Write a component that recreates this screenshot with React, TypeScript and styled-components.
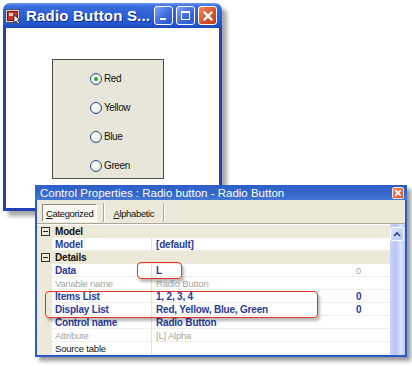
import React from "react";
import styled, { createGlobalStyle, css } from "styled-components";

const GlobalStyle = createGlobalStyle`
  html, body {
    margin: 0;
    padding: 0;
    background: #fff;
  }
  body {
    font-family: "Liberation Sans", Arial, sans-serif;
  }
`;

type Tone = "strong" | "muted" | "plain";

interface IRow {
  section?: boolean;
  label: string;
  labelTone?: Tone;
  value?: string;
  valueTone?: Tone;
  extra?: string;
  extraTone?: Tone;
}

const rows: IRow[] = [
  { section: true, label: "Model" },
  { label: "Model", labelTone: "strong", value: "[default]", valueTone: "strong" },
  { section: true, label: "Details" },
  { label: "Data", labelTone: "strong", value: "L", valueTone: "strong", extra: "0", extraTone: "muted" },
  { label: "Variable name", labelTone: "muted", value: "Radio Button", valueTone: "muted" },
  { label: "Items List", labelTone: "strong", value: "1, 2, 3, 4", valueTone: "strong", extra: "0", extraTone: "strong" },
  { label: "Display List", labelTone: "strong", value: "Red, Yellow, Blue, Green", valueTone: "strong", extra: "0", extraTone: "strong" },
  { label: "Control name", labelTone: "strong", value: "Radio Button", valueTone: "strong" },
  { label: "Attribute", labelTone: "muted", value: "[L] Alpha", valueTone: "muted" },
  { label: "Source table", labelTone: "plain", value: "" },
];

const colours = ["Red", "Yellow", "Blue", "Green"];

const Stage = styled.div`
  position: relative;
  width: 412px;
  height: 366px;
  overflow: hidden;
  background: #fff;
`;

/* ---------- first window ---------- */

const MainWindow = styled.div`
  margin: 3px 0 0 3px;
  width: 219px;
  height: 208px;
  display: flex;
  flex-direction: column;
  border-radius: 7px 7px 0 0;
  box-shadow: 5px 5px 4px rgba(0, 0, 0, 0.35);
`;

const TitleBar = styled.div`
  height: 25px;
  display: flex;
  align-items: center;
  padding: 0 5px 0 2px;
  border-radius: 7px 7px 0 0;
  background: linear-gradient(
    180deg,
    #6f9bf0 0%,
    #3a6ddc 12%,
    #2a5fd6 50%,
    #2457cd 85%,
    #1d48b8 100%
  );
`;

const TitleText = styled.span`
  margin-left: 4px;
  color: #fff;
  font-weight: bold;
  font-size: 15px;
  letter-spacing: 0.2px;
  text-shadow: 1px 1px 0 #0b2b8a;
  white-space: nowrap;
`;

const CaptionButtons = styled.div`
  margin-left: auto;
  display: flex;
  gap: 3px;
`;

const CaptionButton = styled.div<{ $close?: boolean }>`
  width: 19px;
  height: 19px;
  box-sizing: border-box;
  border: 1px solid #fff;
  border-radius: 3px;
  display: flex;
  align-items: center;
  justify-content: center;
  background: ${(p) =>
    p.$close
      ? "linear-gradient(135deg, #f08a64 0%, #d9522a 55%, #c23c1c 100%)"
      : "linear-gradient(135deg, #7fa4f4 0%, #3d6be0 55%, #2a56cc 100%)"};
`;

const ClientArea = styled.div`
  flex: 1;
  background: #fff;
  border: 3px solid #2540b4;
  border-top: none;
  padding: 31px 0 0 46px;
`;

const GroupBox = styled.div`
  width: 112px;
  height: 120px;
  box-sizing: border-box;
  background: #e8e6d8;
  border: 1px solid #4a4a4a;
  padding: 4px 0 0 37px;
`;

const RadioRow = styled.div`
  height: 29px;
  display: flex;
  align-items: center;
  gap: 2px;
  font-size: 10px;
  letter-spacing: -0.4px;
  color: #111;
`;

const RadioCircle = styled.span<{ $checked?: boolean }>`
  width: 12px;
  height: 12px;
  box-sizing: border-box;
  border-radius: 50%;
  border: 1px solid #1d5283;
  background: radial-gradient(circle at 35% 35%, #fff 0%, #f2f2ec 45%, #d4d4cb 100%);
  display: flex;
  align-items: center;
  justify-content: center;

  &::after {
    content: "";
    display: ${(p) => (p.$checked ? "block" : "none")};
    width: 4px;
    height: 4px;
    border-radius: 50%;
    background: #2aa82a;
  }
`;

/* ---------- properties window ---------- */

const PropsWindow = styled.div`
  position: absolute;
  left: 35px;
  top: 185px;
  width: 372px;
  height: 172px;
  box-sizing: border-box;
  display: flex;
  flex-direction: column;
  background: #ece9d8;
  border: 2px solid #2a5ac6;
  border-top: none;
  box-shadow: 4px 4px 4px rgba(0, 0, 0, 0.4);
`;

const SmallTitleBar = styled.div`
  height: 16px;
  margin: 0 -2px;
  display: flex;
  align-items: center;
  padding: 0 3px 0 5px;
  background: linear-gradient(180deg, #2d5ec6 0%, #3468cc 60%, #4576d4 100%);
  color: #fff;
  font-size: 11.5px;
  white-space: nowrap;
`;

const SmallClose = styled.div`
  margin-left: auto;
  width: 12px;
  height: 12px;
  box-sizing: border-box;
  border: 1px solid #f3e7e0;
  border-radius: 2px;
  background: linear-gradient(135deg, #ee8a66 0%, #d4502a 100%);
  display: flex;
  align-items: center;
  justify-content: center;
`;

const Toolbar = styled.div`
  height: 24px;
  display: flex;
  align-items: flex-start;
  padding: 4px 0 0 5px;
  box-sizing: border-box;
  font-size: 9.5px;
  letter-spacing: -0.35px;
  color: #111;
`;

const ToolButton = styled.div<{ $pressed?: boolean }>`
  height: 18px;
  box-sizing: border-box;
  padding: 0 3px;
  display: flex;
  align-items: center;
  ${(p) =>
    p.$pressed &&
    css`
      background: #f7f6f1;
      border: 1px solid;
      border-color: #8c8a80 #fff #fff #8c8a80;
    `}

  u {
    text-decoration: underline;
  }
`;

const ToolSeparator = styled.div`
  width: 2px;
  height: 19px;
  margin: -1px 5px 0 6px;
  border-left: 1px solid #aca899;
  border-right: 1px solid #fff;
  box-sizing: border-box;
`;

const GridArea = styled.div`
  flex: 1;
  display: flex;
  border-top: 1px solid #aca899;
  background: #fff;
`;

const Grid = styled.div`
  flex: 1;
  padding-top: 1px;
`;

const GridRow = styled.div<{ $section?: boolean }>`
  height: 13px;
  display: grid;
  grid-template-columns: 15px 100px 197px 1fr;
  line-height: 13px;
  font-size: 9.5px;
  letter-spacing: -0.2px;
  background: ${(p) => (p.$section ? "#ece9d8" : "#fff")};
`;

const Gutter = styled.div`
  background: #ece9d8;
  display: flex;
  align-items: center;
  justify-content: center;
`;

const Collapse = styled.span`
  position: relative;
  width: 9px;
  height: 9px;
  box-sizing: border-box;
  border: 1px solid #333;
  margin-left: 2px;

  &::after {
    content: "";
    position: absolute;
    left: 1px;
    right: 1px;
    top: 3px;
    height: 1px;
    background: #222;
  }
`;

const SectionTitle = styled.div`
  grid-column: 2 / 5;
  padding-left: 3px;
  font-weight: bold;
  font-size: 10px;
  color: #111;
`;

const toneStyle = (tone?: Tone) => {
  if (tone === "strong") return "color: #283b9c; font-weight: bold; font-size: 10px;";
  if (tone === "muted") return "color: #a5a5a5;";
  return "color: #111;";
};

const Cell = styled.div<{ $tone?: Tone; $divider?: boolean; $pad?: number }>`
  padding-left: ${(p) => p.$pad ?? 3}px;
  border-bottom: 1px solid #efeee8;
  border-right: ${(p) => (p.$divider ? "1px solid #e2e1da" : "none")};
  box-sizing: border-box;
  white-space: nowrap;
  overflow: hidden;
  ${(p) => toneStyle(p.$tone)}
`;

const Scrollbar = styled.div`
  width: 15px;
  padding: 3px 1px 0 0;
  box-sizing: border-box;
  background: linear-gradient(90deg, #c9d2fa 0%, #b9c5f5 40%, #dde3fc 70%, #c4cdf7 100%);
`;

const ScrollUp = styled.div`
  height: 12px;
  border: 1px solid #fff;
  border-radius: 2px;
  background: linear-gradient(135deg, #d8e3fd 0%, #b6c8f6 100%);
  display: flex;
  align-items: center;
  justify-content: center;
`;

const Highlight = styled.div<{ $left: number; $top: number; $w: number; $h: number }>`
  position: absolute;
  left: ${(p) => p.$left}px;
  top: ${(p) => p.$top}px;
  width: ${(p) => p.$w}px;
  height: ${(p) => p.$h}px;
  box-sizing: border-box;
  border: 1.5px solid #e2332b;
  border-radius: 4px;
  box-shadow: 2px 3px 3px rgba(0, 0, 0, 0.28);
`;

function AppIcon() {
  return (
    <svg width="17" height="16" viewBox="0 0 17 16">
      <rect x="0.5" y="1.5" width="14" height="13" fill="#d8d4cc" stroke="#555" />
      <rect x="2.5" y="3.5" width="10" height="9" fill="#c83228" stroke="#7a1a14" />
      <rect x="4" y="5" width="4" height="3" fill="#f0d0c0" />
      <path d="M9 7 L9 15 L11 13 L13 16 L14.5 15 L12.5 12 L15 12 Z" fill="#fff" stroke="#222" strokeWidth="0.8" />
    </svg>
  );
}

function CloseGlyph({ size }: { size: number }) {
  return (
    <svg width={size} height={size} viewBox="0 0 10 10">
      <path d="M2 2 L8 8 M8 2 L2 8" stroke="#fff" strokeWidth="2" strokeLinecap="round" />
    </svg>
  );
}

export default function App() {
  return (
    <Stage>
      <GlobalStyle />

      <MainWindow>
        <TitleBar>
          <AppIcon />
          <TitleText>Radio Button S...</TitleText>
          <CaptionButtons>
            <CaptionButton>
              <svg width="13" height="13" viewBox="0 0 13 13">
                <rect x="3" y="9" width="6" height="2" fill="#fff" />
              </svg>
            </CaptionButton>
            <CaptionButton>
              <svg width="13" height="13" viewBox="0 0 13 13">
                <rect x="2.5" y="2.5" width="8" height="8" fill="none" stroke="#fff" />
                <rect x="2" y="2" width="9" height="2" fill="#fff" />
              </svg>
            </CaptionButton>
            <CaptionButton $close>
              <CloseGlyph size={12} />
            </CaptionButton>
          </CaptionButtons>
        </TitleBar>
        <ClientArea>
          <GroupBox>
            {colours.map((c, i) => (
              <RadioRow key={c}>
                <RadioCircle $checked={i === 0} />
                <span>{c}</span>
              </RadioRow>
            ))}
          </GroupBox>
        </ClientArea>
      </MainWindow>

      <PropsWindow>
        <SmallTitleBar>
          Control Properties : Radio button - Radio Button
          <SmallClose>
            <CloseGlyph size={8} />
          </SmallClose>
        </SmallTitleBar>
        <Toolbar>
          <ToolButton $pressed>
            <span><u>C</u>ategorized</span>
          </ToolButton>
          <ToolSeparator />
          <ToolButton>
            <span><u>A</u>lphabetic</span>
          </ToolButton>
          <ToolSeparator />
        </Toolbar>
        <GridArea>
          <Grid>
            {rows.map((r, i) =>
              r.section ? (
                <GridRow key={i} $section>
                  <Gutter>
                    <Collapse />
                  </Gutter>
                  <SectionTitle>{r.label}</SectionTitle>
                </GridRow>
              ) : (
                <GridRow key={i}>
                  <Gutter />
                  <Cell $tone={r.labelTone} $divider>
                    {r.label}
                  </Cell>
                  <Cell $tone={r.valueTone} $pad={4}>
                    {r.value}
                  </Cell>
                  <Cell $tone={r.extraTone} $pad={7}>
                    {r.extra}
                  </Cell>
                </GridRow>
              )
            )}
          </Grid>
          <Scrollbar>
            <ScrollUp>
              <svg width="8" height="6" viewBox="0 0 8 6">
                <path d="M1 5 L4 2 L7 5" fill="none" stroke="#2c3f8c" strokeWidth="1.6" />
              </svg>
            </ScrollUp>
          </Scrollbar>
        </GridArea>
      </PropsWindow>

      <Highlight $left={137} $top={262} $w={45} $h={17} />
      <Highlight $left={45} $top={291} $w={273} $h={27} />
    </Stage>
  );
}
